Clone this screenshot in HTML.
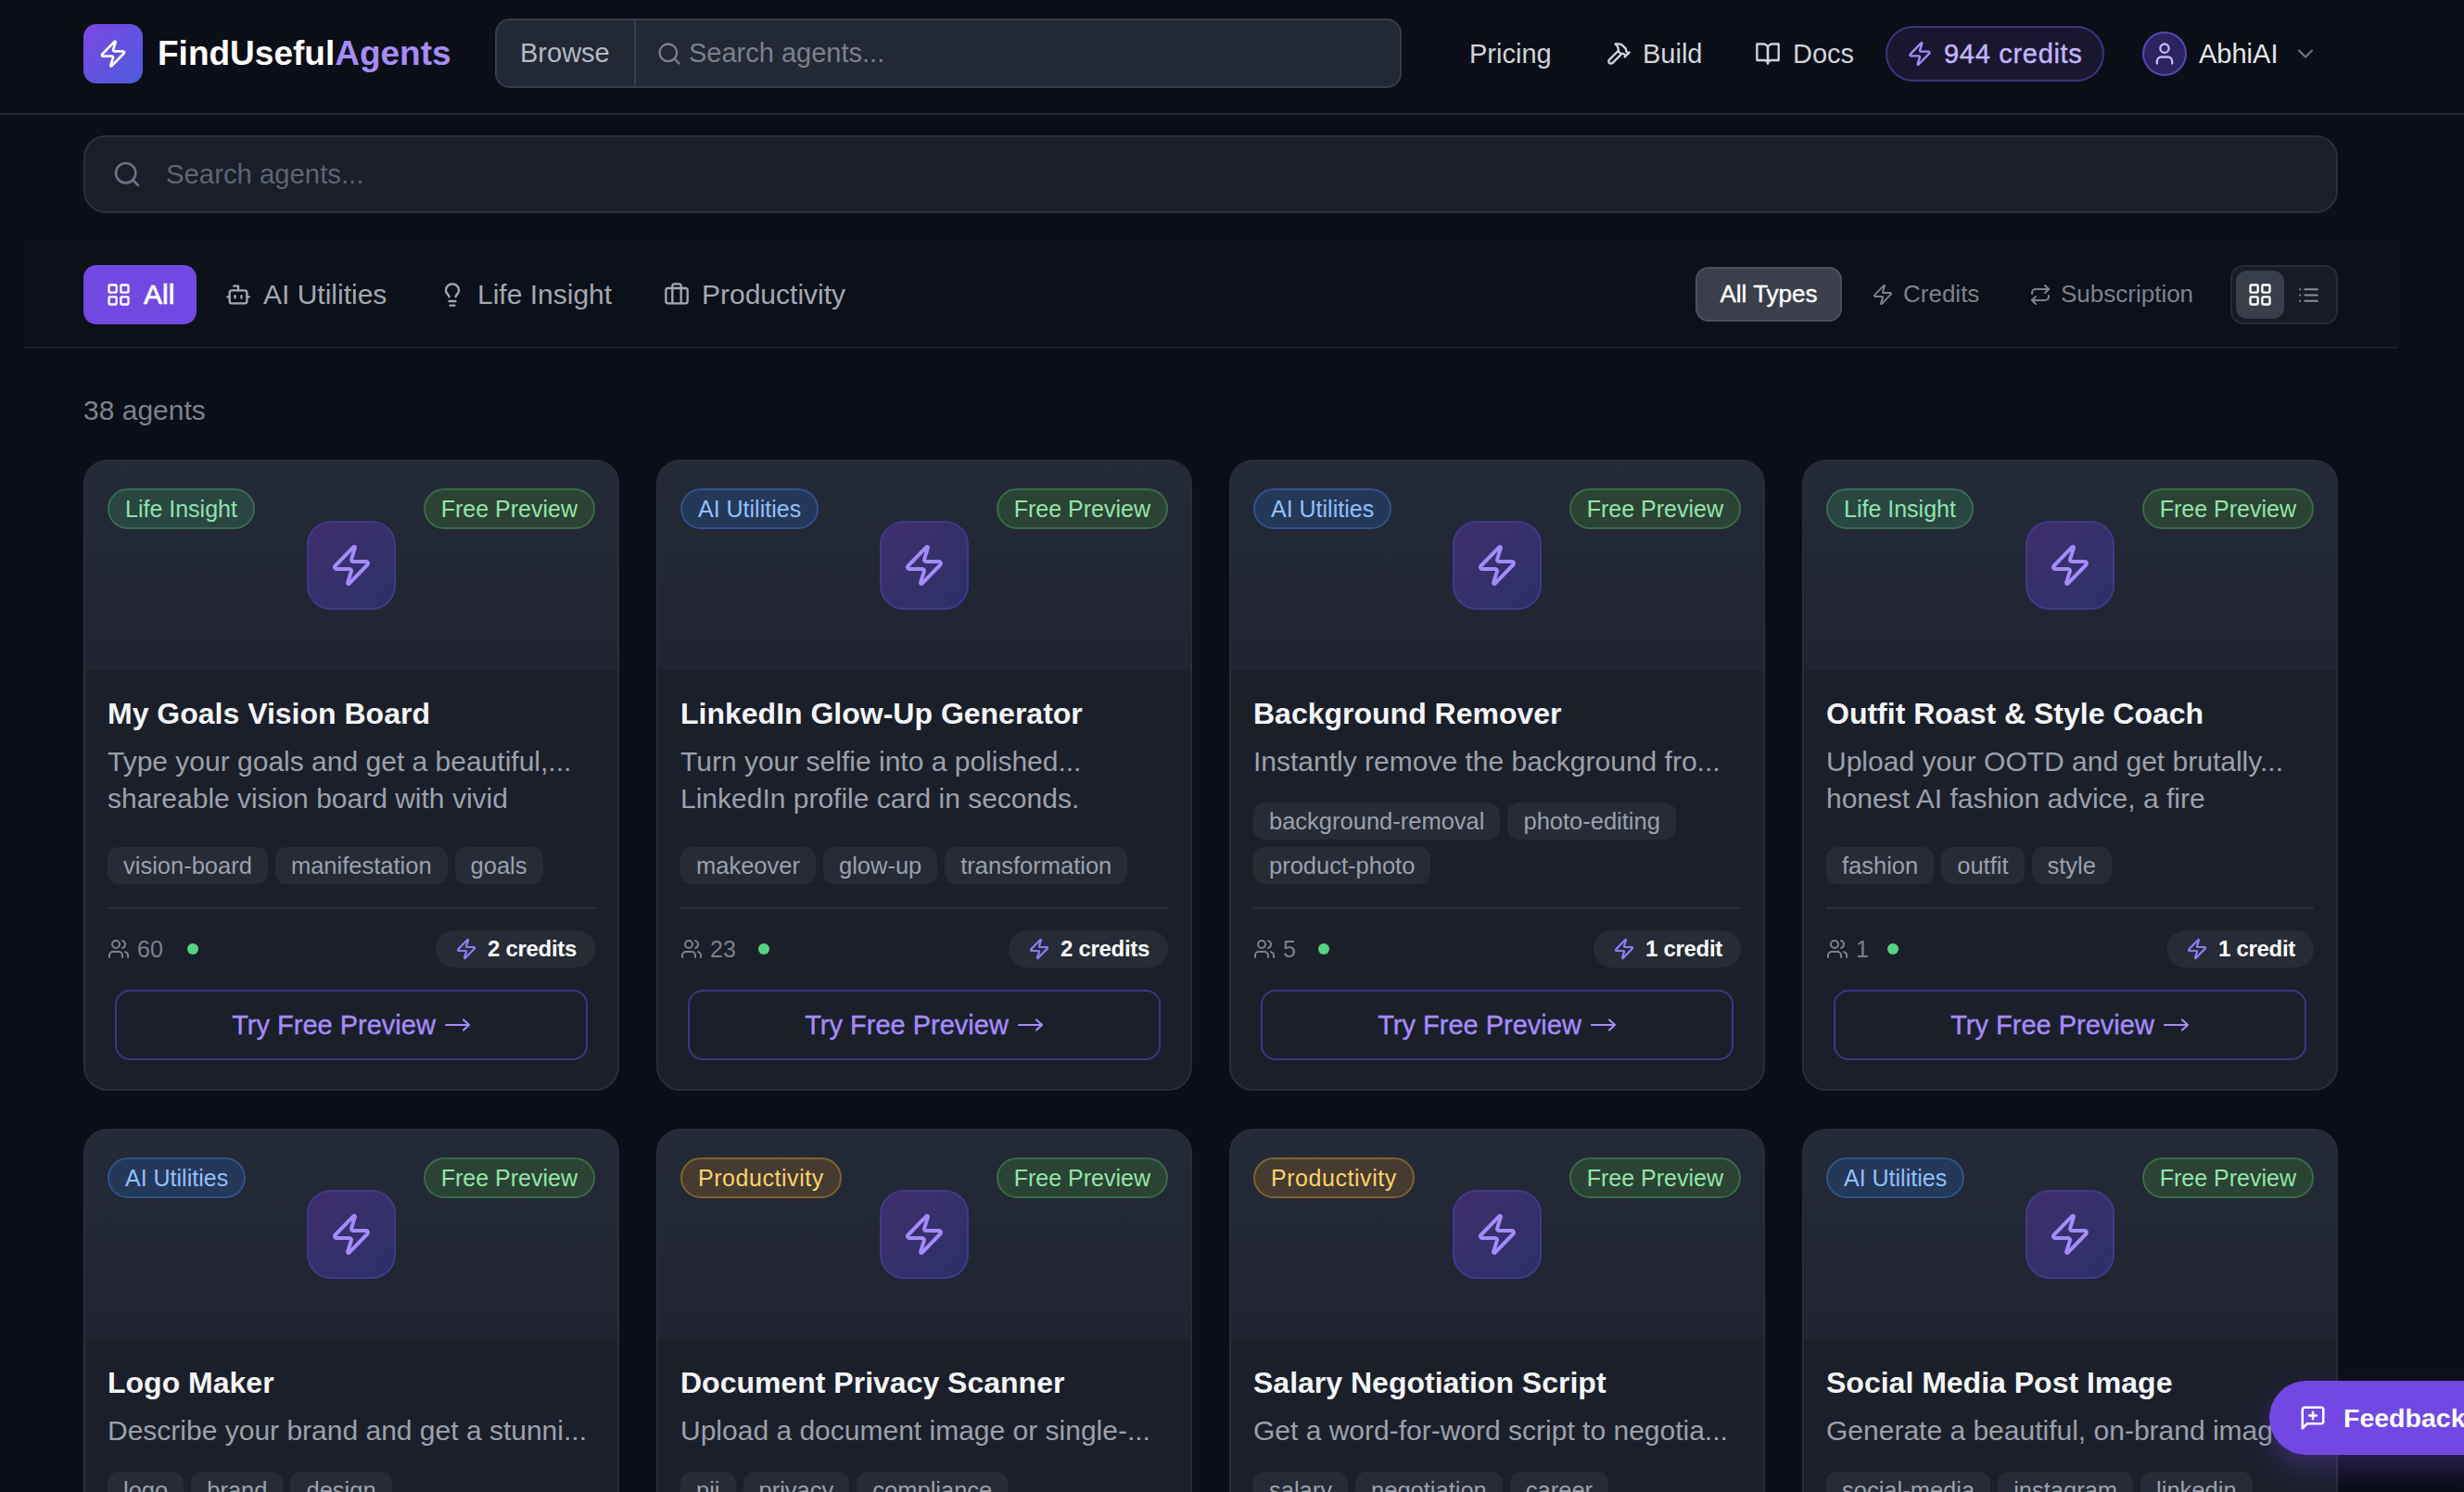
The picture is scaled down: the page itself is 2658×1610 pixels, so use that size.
<!DOCTYPE html>
<html><head><meta charset="utf-8">
<style>
*{box-sizing:border-box;margin:0;padding:0}
html,body{width:2658px;height:1610px;overflow:hidden;background:#0b0e16;font-family:"Liberation Sans",sans-serif;position:relative}
.a{position:absolute}
svg{display:block;fill:none;stroke:currentColor;stroke-linecap:round;stroke-linejoin:round}
.fc{display:flex;align-items:center}
.nw{white-space:nowrap}
/* header */
#hdr{left:0;top:0;width:2658px;height:124px;border-bottom:2px solid #212632;background:#0b0e16}
#logo{left:90px;top:26px;width:64px;height:64px;border-radius:14px;background:linear-gradient(135deg,#7c48e4,#4d5cdc);color:#fff;justify-content:center}
#brand{left:170px;top:28px;height:60px;font-size:37px;font-weight:700;color:#fff;letter-spacing:0}
#brand span{color:#a78bfa}
#hsearch{left:534px;top:20px;width:978px;height:75px;border:2px solid #363d4a;background:#222834;border-radius:16px;overflow:hidden}
#hsearch .browse{width:150px;height:100%;border-right:2px solid #363d4a;font-size:29px;color:#b4b8c1;padding-left:25px}
#hsearch .ph{font-size:29px;color:#7b808b}
.nav{font-size:29px;color:#d1d5db;height:60px;top:28px}
#credits{left:2034px;top:28px;width:236px;height:60px;border:2px solid #3d3380;background:#191730;border-radius:30px;color:#c4b5fd;font-size:29px;letter-spacing:0.7px}
#avatar{left:2311px;top:34px;width:48px;height:48px;border-radius:50%;background:#2c2461;border:2px solid #5646b4;color:#c4b5fd;justify-content:center}
/* big search */
#bsearch{left:90px;top:146px;width:2432px;height:84px;border:2px solid #2a2f3a;background:#1a1e28;border-radius:24px}
/* tabs */
#tabAll{left:90px;top:286px;width:122px;height:64px;border-radius:14px;background:#7149e2;color:#fff;font-size:30px}
.tab{top:286px;height:64px;font-size:30px;color:#a3a8b2}
#divider{left:26px;top:374px;width:2560px;height:2px;background:#1b1f29}
#count{left:90px;top:423px;font-size:30px;color:#7d838f;line-height:40px}
#allTypes{left:1829px;top:288px;width:158px;height:59px;border-radius:14px;background:#3a3f4b;border:2px solid #4a505c;color:#fff;font-size:26px;justify-content:center;-webkit-text-stroke:0.4px #fff}
.ftype{top:288px;height:59px;font-size:26px;color:#7c828e}
#vtog{left:2406px;top:286px;width:116px;height:64px;border-radius:14px;background:#171b25;border:2px solid #262b36}
#vgrid{left:4px;top:4px;width:52px;height:52px;border-radius:12px;background:#393e4b;color:#fff;justify-content:center}
#vlist{left:59px;top:4px;width:46px;height:52px;color:#8a909b;justify-content:center}
/* cards */
.card{width:578px;height:681px;border:2px solid #282d39;border-radius:26px;background:#1b1f2a;overflow:hidden}
.card .top{left:0;top:0;width:100%;height:225px;background:linear-gradient(180deg,#242a37,#1f2430)}
.pill{top:29px;height:44px;border-radius:22px;font-size:25px;padding:0 17px;border:2px solid}
.pill.li{left:24px;background:#2a4641;border-color:#3a6a55;color:#8fe3b0}
.pill.ai{left:24px;background:#24385a;border-color:#33528a;color:#93c0fa}
.pill.pr{left:24px;background:#463b30;border-color:#80622f;color:#fad36b;letter-spacing:0.55px}
.pill.fp{right:24px;background:#2b4335;border-color:#3b6b46;color:#93e5a8}
.ibox{left:239px;top:64px;width:96px;height:96px;border-radius:26px;background:linear-gradient(135deg,#3f2f6c,#2c3069);border:2px solid #41398c;color:#a48bfa;justify-content:center}
.title{left:24px;top:252px;font-size:32px;font-weight:700;color:#f5f6f8;line-height:40px}
.desc{left:24px;top:304px;width:526px;font-size:30px;color:#9ca1ab;line-height:40px}
.tags{left:24px;width:526px;display:flex;flex-wrap:wrap;gap:8px}
.tag{height:40px;border-radius:12px;background:#262b36;color:#9ca1ab;font-size:25.5px;padding:0 17px;display:flex;align-items:center}
.hr{left:24px;top:481px;width:526px;height:2px;background:#2a2f3a}
.stats{left:24px;top:506px;height:40px;font-size:25px;color:#7c818c}
.dot{width:12px;height:12px;border-radius:50%;background:#57d383}
.cpill{right:24px;top:506px;height:40px;border-radius:20px;background:#262b36;color:#fff;font-size:24px;font-weight:700;padding:0 20px 0 21px;letter-spacing:-0.3px}
.cpill svg{color:#8b7cf6}
.try{left:32px;top:570px;width:510px;height:76px;border:2px solid #3e3680;border-radius:16px;color:#a48bfa;font-size:29px;-webkit-text-stroke:0.4px #a48bfa;justify-content:center}
#feedback{left:2448px;top:1490px;width:260px;height:80px;border-radius:40px;background:#7149e2;color:#fff;font-size:28.5px;font-weight:700;box-shadow:0 14px 30px rgba(111,71,224,0.32)}
</style></head><body>
<div id="hdr" class="a"></div>
<div id="logo" class="a fc"><svg width="32" height="32" viewBox="0 0 24 24" stroke-width="2"><path d="M4 14a1 1 0 0 1-.78-1.63l9.9-10.2a.5.5 0 0 1 .86.46l-1.92 6.02A1 1 0 0 0 13 10h7a1 1 0 0 1 .78 1.63l-9.9 10.2a.5.5 0 0 1-.86-.46l1.92-6.02A1 1 0 0 0 11 14z"/></svg></div>
<div id="brand" class="a fc nw">FindUseful<span>Agents</span></div>
<div id="hsearch" class="a fc">
  <div class="browse fc nw">Browse</div>
  <svg style="margin-left:22px;color:#7b808b" width="28" height="28" viewBox="0 0 24 24" stroke-width="2"><circle cx="11" cy="11" r="8"/><path d="m21 21-4.3-4.3"/></svg>
  <div class="ph nw" style="margin-left:7px">Search agents...</div>
</div>
<div class="a nav fc nw" style="left:1585px">Pricing</div>
<div class="a nav fc nw" style="left:1732px"><svg width="28" height="28" viewBox="0 0 24 24" stroke-width="2"><path d="m15 12-8.5 8.5c-.83.83-2.17.83-3 0a2.12 2.12 0 0 1 0-3L12 9"/><path d="M17.64 15 22 10.64"/><path d="m20.91 11.7-1.25-1.25c-.6-.6-.93-1.4-.93-2.25v-.86L16.01 4.6a5.56 5.56 0 0 0-3.94-1.64H9l.92.82A6.18 6.18 0 0 1 12 8.4v1.56l2 2h2.47l2.26 1.91"/></svg><span style="margin-left:12px">Build</span></div>
<div class="a nav fc nw" style="left:1893px"><svg width="28" height="28" viewBox="0 0 24 24" stroke-width="2"><path d="M2 3h6a4 4 0 0 1 4 4v14a3 3 0 0 0-3-3H2z"/><path d="M22 3h-6a4 4 0 0 0-4 4v14a3 3 0 0 1 3-3h7z"/></svg><span style="margin-left:13px">Docs</span></div>
<div id="credits" class="a fc nw"><svg style="margin-left:21px" width="28" height="28" viewBox="0 0 24 24" stroke-width="2" color="#a78bfa"><path d="M4 14a1 1 0 0 1-.78-1.63l9.9-10.2a.5.5 0 0 1 .86.46l-1.92 6.02A1 1 0 0 0 13 10h7a1 1 0 0 1 .78 1.63l-9.9 10.2a.5.5 0 0 1-.86-.46l1.92-6.02A1 1 0 0 0 11 14z"/></svg><span style="margin-left:12px;-webkit-text-stroke:0.4px #c4b5fd">944 credits</span></div>
<div id="avatar" class="a fc"><svg width="28" height="28" viewBox="0 0 24 24" stroke-width="2"><path d="M19 21v-2a4 4 0 0 0-4-4H9a4 4 0 0 0-4 4v2"/><circle cx="12" cy="7" r="4"/></svg></div>
<div class="a nav fc nw" style="left:2372px;color:#e5e7eb">AbhiAI<svg style="margin-left:16px;color:#6b7280" width="28" height="28" viewBox="0 0 24 24" stroke-width="2"><path d="m6 9 6 6 6-6"/></svg></div>

<div id="bsearch" class="a fc">
  <svg style="margin-left:29px;color:#6b7280" width="32" height="32" viewBox="0 0 24 24" stroke-width="2"><circle cx="11" cy="11" r="8"/><path d="m21 21-4.3-4.3"/></svg>
  <div class="nw" style="margin-left:26px;font-size:29.3px;color:#5f6571">Search agents...</div>
</div>

<div class="a" style="left:26px;top:260px;width:2560px;height:114px;background:#0c1018"></div>
<div id="tabAll" class="a fc nw"><svg style="margin-left:24px" width="28" height="28" viewBox="0 0 24 24" stroke-width="2"><rect width="7" height="7" x="3" y="3" rx="1"/><rect width="7" height="7" x="14" y="3" rx="1"/><rect width="7" height="7" x="14" y="14" rx="1"/><rect width="7" height="7" x="3" y="14" rx="1"/></svg><span style="margin-left:13px;font-weight:400;-webkit-text-stroke:0.7px #fff">All</span></div>
<div class="a tab fc nw" style="left:243px"><svg width="28" height="28" viewBox="0 0 24 24" stroke-width="2"><path d="M12 8V4H8"/><rect width="16" height="12" x="4" y="8" rx="2"/><path d="M2 14h2"/><path d="M20 14h2"/><path d="M15 13v2"/><path d="M9 13v2"/></svg><span style="margin-left:13px">AI Utilities</span></div>
<div class="a tab fc nw" style="left:474px"><svg width="28" height="28" viewBox="0 0 24 24" stroke-width="2"><path d="M15 14c.2-1 .7-1.7 1.5-2.5 1-.9 1.5-2.2 1.5-3.5A6 6 0 0 0 6 8c0 1 .2 2.2 1.5 3.5.7.7 1.3 1.5 1.5 2.5"/><path d="M9 18h6"/><path d="M10 22h4"/></svg><span style="margin-left:13px">Life Insight</span></div>
<div class="a tab fc nw" style="left:716px"><svg width="28" height="28" viewBox="0 0 24 24" stroke-width="2"><path d="M16 20V4a2 2 0 0 0-2-2h-4a2 2 0 0 0-2 2v16"/><rect width="20" height="14" x="2" y="6" rx="2"/></svg><span style="margin-left:13px">Productivity</span></div>

<div id="allTypes" class="a fc nw">All Types</div>
<div class="a ftype fc nw" style="left:2019px"><svg width="24" height="24" viewBox="0 0 24 24" stroke-width="2"><path d="M4 14a1 1 0 0 1-.78-1.63l9.9-10.2a.5.5 0 0 1 .86.46l-1.92 6.02A1 1 0 0 0 13 10h7a1 1 0 0 1 .78 1.63l-9.9 10.2a.5.5 0 0 1-.86-.46l1.92-6.02A1 1 0 0 0 11 14z"/></svg><span style="margin-left:10px">Credits</span></div>
<div class="a ftype fc nw" style="left:2189px"><svg width="24" height="24" viewBox="0 0 24 24" stroke-width="2"><path d="m17 2 4 4-4 4"/><path d="M3 11v-1a4 4 0 0 1 4-4h14"/><path d="m7 22-4-4 4-4"/><path d="M21 13v1a4 4 0 0 1-4 4H3"/></svg><span style="margin-left:10px">Subscription</span></div>
<div id="vtog" class="a">
  <div id="vgrid" class="a fc"><svg width="28" height="28" viewBox="0 0 24 24" stroke-width="2"><rect width="7" height="7" x="3" y="3" rx="1"/><rect width="7" height="7" x="14" y="3" rx="1"/><rect width="7" height="7" x="14" y="14" rx="1"/><rect width="7" height="7" x="3" y="14" rx="1"/></svg></div>
  <div id="vlist" class="a fc"><svg width="25" height="25" viewBox="0 0 24 24" stroke-width="2"><path d="M3 12h.01"/><path d="M3 18h.01"/><path d="M3 6h.01"/><path d="M8 12h13"/><path d="M8 18h13"/><path d="M8 6h13"/></svg></div>
</div>
<div id="divider" class="a"></div>
<div id="count" class="a nw">38 agents</div>

<div class="a card" style="left:90px;top:496px">
<div class="a top"></div>
<div class="a pill fc nw li">Life Insight</div>
<div class="a pill fc nw fp">Free Preview</div>
<div class="a ibox fc"><svg width="48" height="48" viewBox="0 0 24 24" stroke-width="2"><path d="M4 14a1 1 0 0 1-.78-1.63l9.9-10.2a.5.5 0 0 1 .86.46l-1.92 6.02A1 1 0 0 0 13 10h7a1 1 0 0 1 .78 1.63l-9.9 10.2a.5.5 0 0 1-.86-.46l1.92-6.02A1 1 0 0 0 11 14z"/></svg></div>
<div class="a title nw">My Goals Vision Board</div>
<div class="a desc">Type your goals and get a beautiful,...<br>shareable vision board with vivid</div>
<div class="a tags" style="top:416px"><div class="tag nw">vision-board</div><div class="tag nw">manifestation</div><div class="tag nw">goals</div></div>
<div class="a hr"></div>
<div class="a stats fc nw"><svg width="24" height="24" viewBox="0 0 24 24" stroke-width="2"><path d="M16 21v-2a4 4 0 0 0-4-4H6a4 4 0 0 0-4 4v2"/><circle cx="9" cy="7" r="4"/><path d="M22 21v-2a4 4 0 0 0-3-3.87"/><path d="M16 3.13a4 4 0 0 1 0 7.75"/></svg><span style="margin-left:8px">60</span></div>
<div class="a dot" style="left:110px;top:520px"></div>
<div class="a cpill fc nw"><svg width="24" height="24" viewBox="0 0 24 24" stroke-width="2.2"><path d="M4 14a1 1 0 0 1-.78-1.63l9.9-10.2a.5.5 0 0 1 .86.46l-1.92 6.02A1 1 0 0 0 13 10h7a1 1 0 0 1 .78 1.63l-9.9 10.2a.5.5 0 0 1-.86-.46l1.92-6.02A1 1 0 0 0 11 14z"/></svg><span style="margin-left:11px">2 credits</span></div>
<div class="a try fc nw">Try Free Preview<svg style="margin-left:10px" width="28" height="16" viewBox="0 0 28 16" stroke-width="2.2"><path d="M1 8h25M20 2.5l6 5.5-6 5.5"/></svg></div>
</div>
<div class="a card" style="left:708px;top:496px">
<div class="a top"></div>
<div class="a pill fc nw ai">AI Utilities</div>
<div class="a pill fc nw fp">Free Preview</div>
<div class="a ibox fc"><svg width="48" height="48" viewBox="0 0 24 24" stroke-width="2"><path d="M4 14a1 1 0 0 1-.78-1.63l9.9-10.2a.5.5 0 0 1 .86.46l-1.92 6.02A1 1 0 0 0 13 10h7a1 1 0 0 1 .78 1.63l-9.9 10.2a.5.5 0 0 1-.86-.46l1.92-6.02A1 1 0 0 0 11 14z"/></svg></div>
<div class="a title nw">LinkedIn Glow-Up Generator</div>
<div class="a desc">Turn your selfie into a polished...<br>LinkedIn profile card in seconds.</div>
<div class="a tags" style="top:416px"><div class="tag nw">makeover</div><div class="tag nw">glow-up</div><div class="tag nw">transformation</div></div>
<div class="a hr"></div>
<div class="a stats fc nw"><svg width="24" height="24" viewBox="0 0 24 24" stroke-width="2"><path d="M16 21v-2a4 4 0 0 0-4-4H6a4 4 0 0 0-4 4v2"/><circle cx="9" cy="7" r="4"/><path d="M22 21v-2a4 4 0 0 0-3-3.87"/><path d="M16 3.13a4 4 0 0 1 0 7.75"/></svg><span style="margin-left:8px">23</span></div>
<div class="a dot" style="left:108px;top:520px"></div>
<div class="a cpill fc nw"><svg width="24" height="24" viewBox="0 0 24 24" stroke-width="2.2"><path d="M4 14a1 1 0 0 1-.78-1.63l9.9-10.2a.5.5 0 0 1 .86.46l-1.92 6.02A1 1 0 0 0 13 10h7a1 1 0 0 1 .78 1.63l-9.9 10.2a.5.5 0 0 1-.86-.46l1.92-6.02A1 1 0 0 0 11 14z"/></svg><span style="margin-left:11px">2 credits</span></div>
<div class="a try fc nw">Try Free Preview<svg style="margin-left:10px" width="28" height="16" viewBox="0 0 28 16" stroke-width="2.2"><path d="M1 8h25M20 2.5l6 5.5-6 5.5"/></svg></div>
</div>
<div class="a card" style="left:1326px;top:496px">
<div class="a top"></div>
<div class="a pill fc nw ai">AI Utilities</div>
<div class="a pill fc nw fp">Free Preview</div>
<div class="a ibox fc"><svg width="48" height="48" viewBox="0 0 24 24" stroke-width="2"><path d="M4 14a1 1 0 0 1-.78-1.63l9.9-10.2a.5.5 0 0 1 .86.46l-1.92 6.02A1 1 0 0 0 13 10h7a1 1 0 0 1 .78 1.63l-9.9 10.2a.5.5 0 0 1-.86-.46l1.92-6.02A1 1 0 0 0 11 14z"/></svg></div>
<div class="a title nw">Background Remover</div>
<div class="a desc">Instantly remove the background fro...</div>
<div class="a tags" style="top:368px"><div class="tag nw">background-removal</div><div class="tag nw">photo-editing</div><div class="tag nw">product-photo</div></div>
<div class="a hr"></div>
<div class="a stats fc nw"><svg width="24" height="24" viewBox="0 0 24 24" stroke-width="2"><path d="M16 21v-2a4 4 0 0 0-4-4H6a4 4 0 0 0-4 4v2"/><circle cx="9" cy="7" r="4"/><path d="M22 21v-2a4 4 0 0 0-3-3.87"/><path d="M16 3.13a4 4 0 0 1 0 7.75"/></svg><span style="margin-left:8px">5</span></div>
<div class="a dot" style="left:94px;top:520px"></div>
<div class="a cpill fc nw"><svg width="24" height="24" viewBox="0 0 24 24" stroke-width="2.2"><path d="M4 14a1 1 0 0 1-.78-1.63l9.9-10.2a.5.5 0 0 1 .86.46l-1.92 6.02A1 1 0 0 0 13 10h7a1 1 0 0 1 .78 1.63l-9.9 10.2a.5.5 0 0 1-.86-.46l1.92-6.02A1 1 0 0 0 11 14z"/></svg><span style="margin-left:11px">1 credit</span></div>
<div class="a try fc nw">Try Free Preview<svg style="margin-left:10px" width="28" height="16" viewBox="0 0 28 16" stroke-width="2.2"><path d="M1 8h25M20 2.5l6 5.5-6 5.5"/></svg></div>
</div>
<div class="a card" style="left:1944px;top:496px">
<div class="a top"></div>
<div class="a pill fc nw li">Life Insight</div>
<div class="a pill fc nw fp">Free Preview</div>
<div class="a ibox fc"><svg width="48" height="48" viewBox="0 0 24 24" stroke-width="2"><path d="M4 14a1 1 0 0 1-.78-1.63l9.9-10.2a.5.5 0 0 1 .86.46l-1.92 6.02A1 1 0 0 0 13 10h7a1 1 0 0 1 .78 1.63l-9.9 10.2a.5.5 0 0 1-.86-.46l1.92-6.02A1 1 0 0 0 11 14z"/></svg></div>
<div class="a title nw">Outfit Roast &amp; Style Coach</div>
<div class="a desc">Upload your OOTD and get brutally...<br>honest AI fashion advice, a fire</div>
<div class="a tags" style="top:416px"><div class="tag nw">fashion</div><div class="tag nw">outfit</div><div class="tag nw">style</div></div>
<div class="a hr"></div>
<div class="a stats fc nw"><svg width="24" height="24" viewBox="0 0 24 24" stroke-width="2"><path d="M16 21v-2a4 4 0 0 0-4-4H6a4 4 0 0 0-4 4v2"/><circle cx="9" cy="7" r="4"/><path d="M22 21v-2a4 4 0 0 0-3-3.87"/><path d="M16 3.13a4 4 0 0 1 0 7.75"/></svg><span style="margin-left:8px">1</span></div>
<div class="a dot" style="left:90px;top:520px"></div>
<div class="a cpill fc nw"><svg width="24" height="24" viewBox="0 0 24 24" stroke-width="2.2"><path d="M4 14a1 1 0 0 1-.78-1.63l9.9-10.2a.5.5 0 0 1 .86.46l-1.92 6.02A1 1 0 0 0 13 10h7a1 1 0 0 1 .78 1.63l-9.9 10.2a.5.5 0 0 1-.86-.46l1.92-6.02A1 1 0 0 0 11 14z"/></svg><span style="margin-left:11px">1 credit</span></div>
<div class="a try fc nw">Try Free Preview<svg style="margin-left:10px" width="28" height="16" viewBox="0 0 28 16" stroke-width="2.2"><path d="M1 8h25M20 2.5l6 5.5-6 5.5"/></svg></div>
</div>
<div class="a card" style="left:90px;top:1218px">
<div class="a top"></div>
<div class="a pill fc nw ai">AI Utilities</div>
<div class="a pill fc nw fp">Free Preview</div>
<div class="a ibox fc"><svg width="48" height="48" viewBox="0 0 24 24" stroke-width="2"><path d="M4 14a1 1 0 0 1-.78-1.63l9.9-10.2a.5.5 0 0 1 .86.46l-1.92 6.02A1 1 0 0 0 13 10h7a1 1 0 0 1 .78 1.63l-9.9 10.2a.5.5 0 0 1-.86-.46l1.92-6.02A1 1 0 0 0 11 14z"/></svg></div>
<div class="a title nw">Logo Maker</div>
<div class="a desc">Describe your brand and get a stunni...</div>
<div class="a tags" style="top:368px"><div class="tag nw">logo</div><div class="tag nw">brand</div><div class="tag nw">design</div></div>
</div>
<div class="a card" style="left:708px;top:1218px">
<div class="a top"></div>
<div class="a pill fc nw pr">Productivity</div>
<div class="a pill fc nw fp">Free Preview</div>
<div class="a ibox fc"><svg width="48" height="48" viewBox="0 0 24 24" stroke-width="2"><path d="M4 14a1 1 0 0 1-.78-1.63l9.9-10.2a.5.5 0 0 1 .86.46l-1.92 6.02A1 1 0 0 0 13 10h7a1 1 0 0 1 .78 1.63l-9.9 10.2a.5.5 0 0 1-.86-.46l1.92-6.02A1 1 0 0 0 11 14z"/></svg></div>
<div class="a title nw">Document Privacy Scanner</div>
<div class="a desc">Upload a document image or single-...</div>
<div class="a tags" style="top:368px"><div class="tag nw">pii</div><div class="tag nw">privacy</div><div class="tag nw">compliance</div></div>
</div>
<div class="a card" style="left:1326px;top:1218px">
<div class="a top"></div>
<div class="a pill fc nw pr">Productivity</div>
<div class="a pill fc nw fp">Free Preview</div>
<div class="a ibox fc"><svg width="48" height="48" viewBox="0 0 24 24" stroke-width="2"><path d="M4 14a1 1 0 0 1-.78-1.63l9.9-10.2a.5.5 0 0 1 .86.46l-1.92 6.02A1 1 0 0 0 13 10h7a1 1 0 0 1 .78 1.63l-9.9 10.2a.5.5 0 0 1-.86-.46l1.92-6.02A1 1 0 0 0 11 14z"/></svg></div>
<div class="a title nw">Salary Negotiation Script</div>
<div class="a desc">Get a word-for-word script to negotia...</div>
<div class="a tags" style="top:368px"><div class="tag nw">salary</div><div class="tag nw">negotiation</div><div class="tag nw">career</div></div>
</div>
<div class="a card" style="left:1944px;top:1218px">
<div class="a top"></div>
<div class="a pill fc nw ai">AI Utilities</div>
<div class="a pill fc nw fp">Free Preview</div>
<div class="a ibox fc"><svg width="48" height="48" viewBox="0 0 24 24" stroke-width="2"><path d="M4 14a1 1 0 0 1-.78-1.63l9.9-10.2a.5.5 0 0 1 .86.46l-1.92 6.02A1 1 0 0 0 13 10h7a1 1 0 0 1 .78 1.63l-9.9 10.2a.5.5 0 0 1-.86-.46l1.92-6.02A1 1 0 0 0 11 14z"/></svg></div>
<div class="a title nw">Social Media Post Image</div>
<div class="a desc">Generate a beautiful, on-brand image...</div>
<div class="a tags" style="top:368px"><div class="tag nw">social-media</div><div class="tag nw">instagram</div><div class="tag nw">linkedin</div></div>
</div>

<div id="feedback" class="a fc nw"><svg style="margin-left:32px" width="30" height="30" viewBox="0 0 24 24" stroke-width="2"><path d="M21 15a2 2 0 0 1-2 2H7l-4 4V5a2 2 0 0 1 2-2h14a2 2 0 0 1 2 2z"/><path d="M12 7v6"/><path d="M9 10h6"/></svg><span style="margin-left:18px">Feedback</span></div>
</body></html>
